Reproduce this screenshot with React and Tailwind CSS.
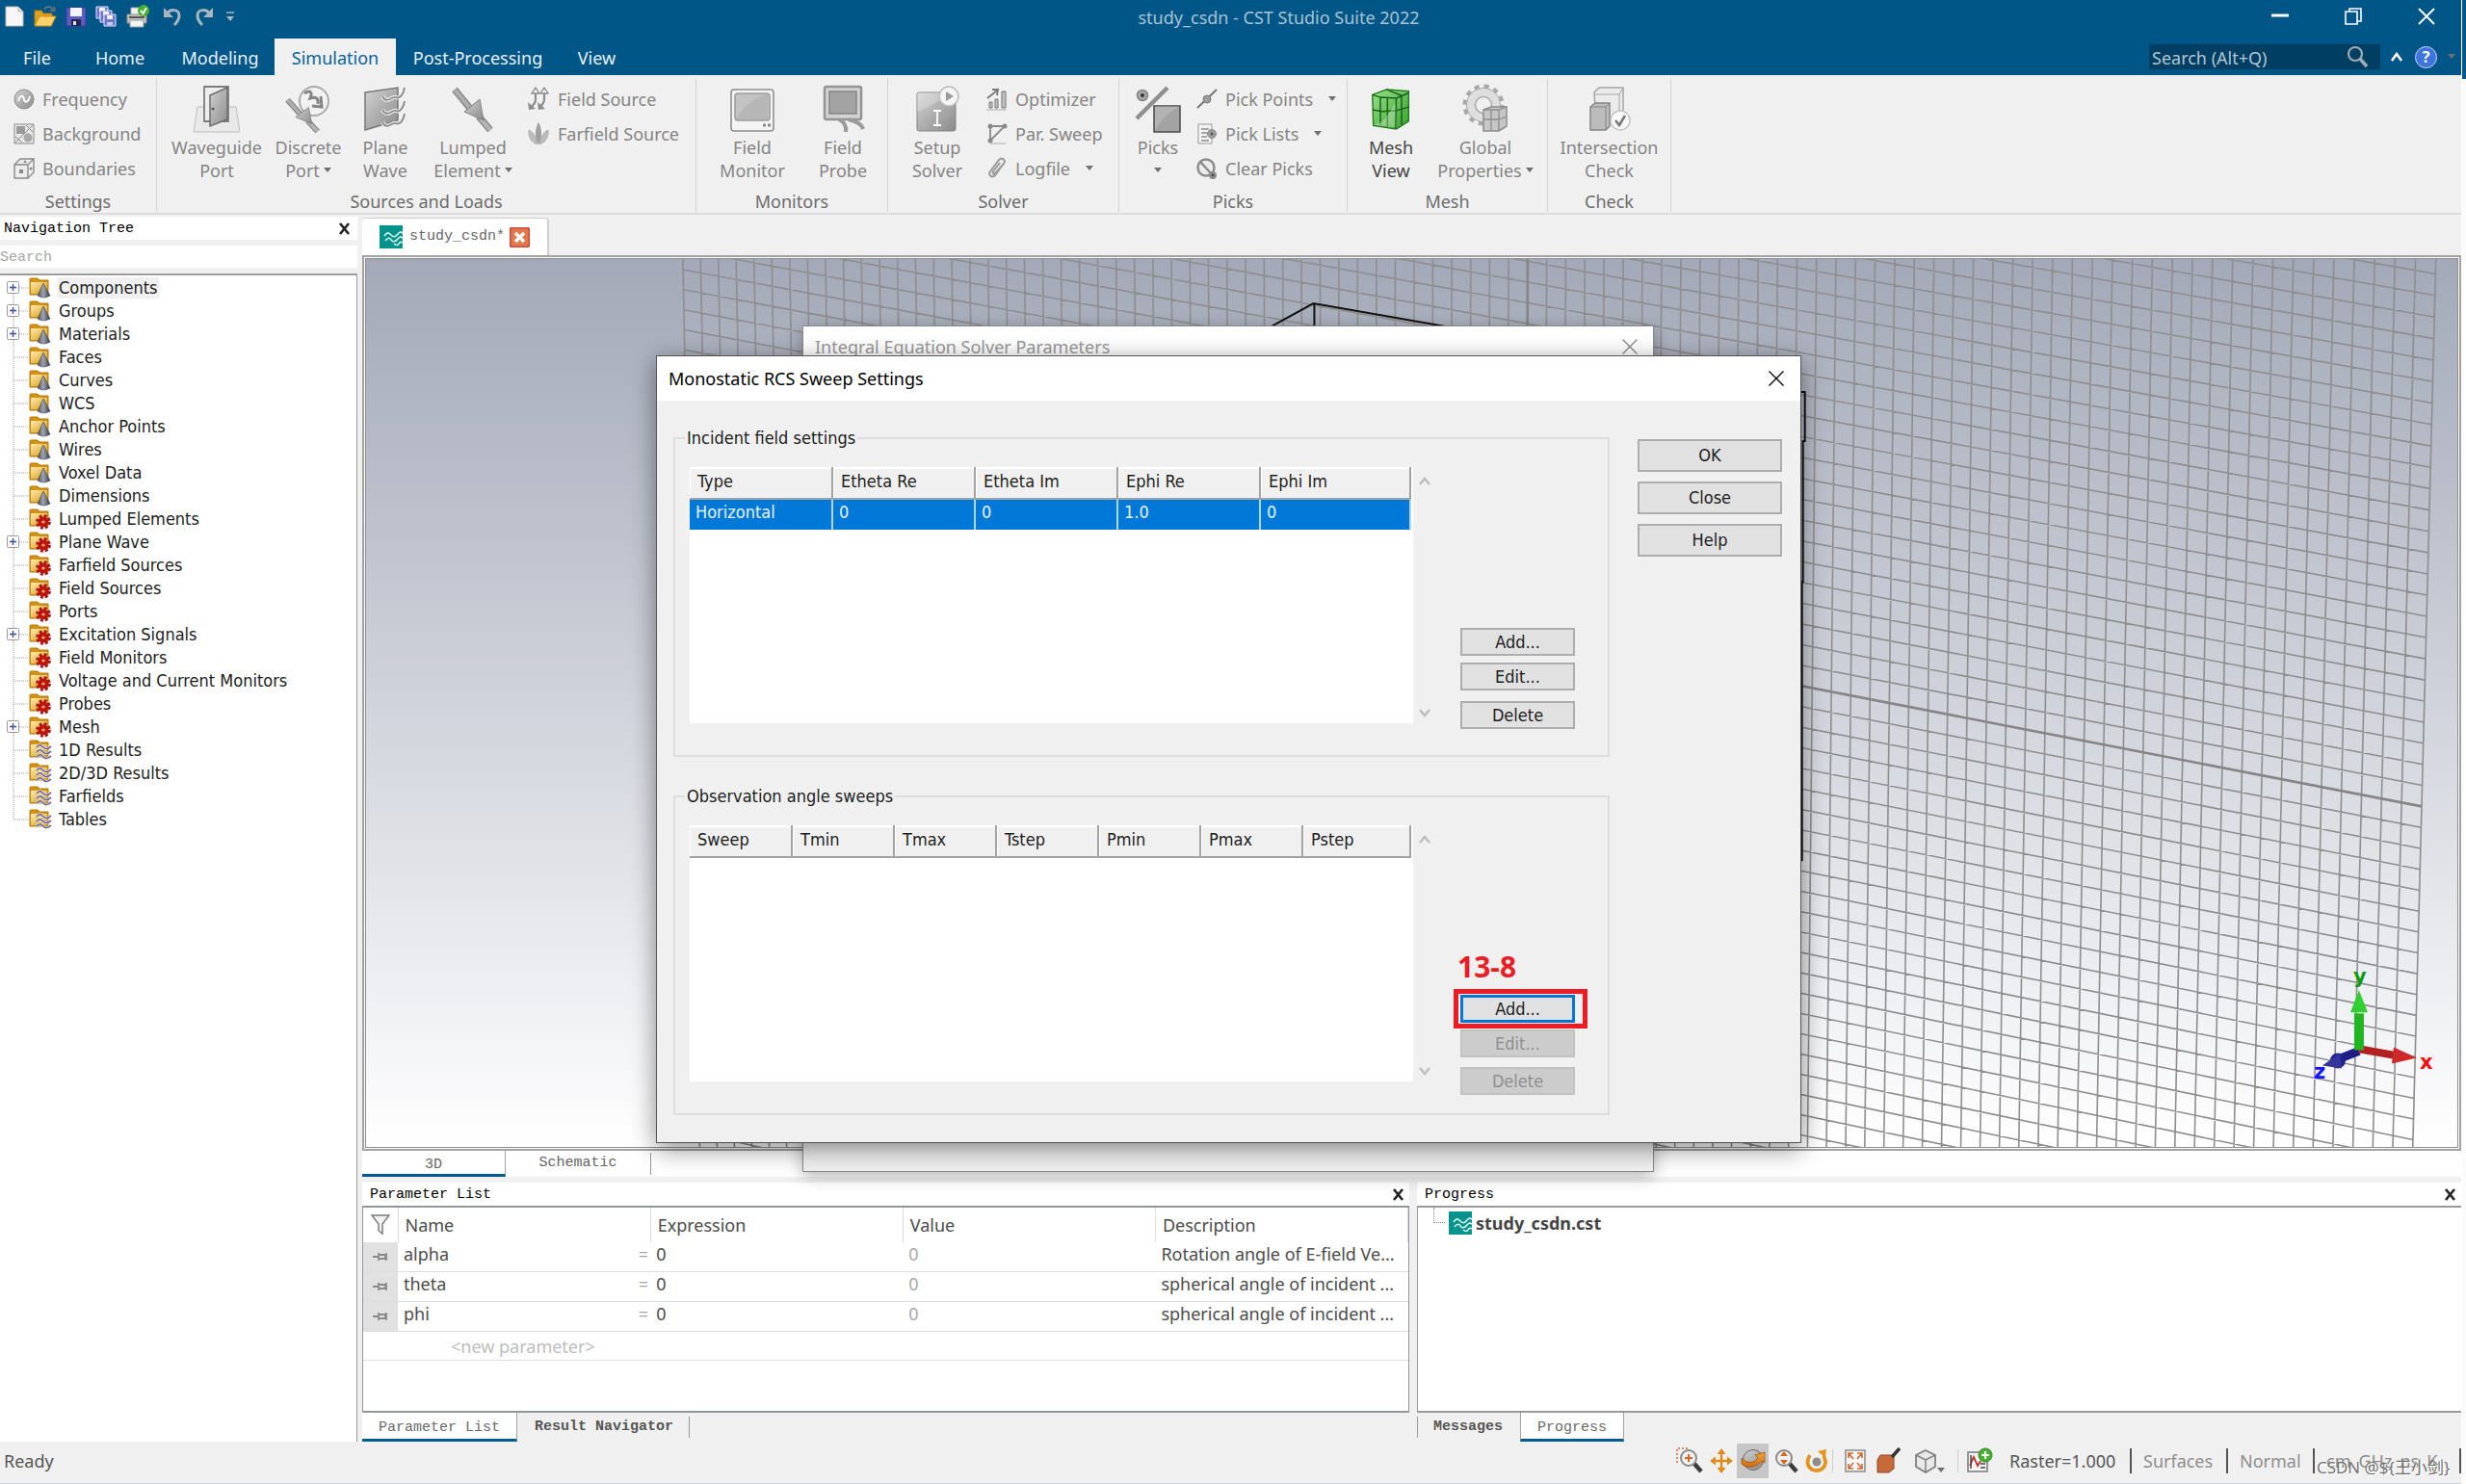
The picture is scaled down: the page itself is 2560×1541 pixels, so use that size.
import React from "react";

const UI = "font-['Noto_Sans','Open_Sans',sans-serif]";
const TAHOMA = "font-['DejaVu_Sans_Condensed','DejaVu_Sans',sans-serif]";
const MONO = "font-['Liberation_Mono',monospace]";

/* ---------- shared defs ---------- */
function Defs() {
  return (
    <svg width="0" height="0" className="absolute" aria-hidden="true">
      <defs>
        <linearGradient id="gm" x1="0" y1="0" x2="1" y2="1">
          <stop offset="0" stopColor="#d2d2d2" />
          <stop offset="1" stopColor="#8b8b8b" />
        </linearGradient>
        <linearGradient id="gy" x1="0" y1="0" x2="1" y2="1">
          <stop offset="0" stopColor="#fdeeb0" />
          <stop offset="1" stopColor="#d9960c" />
        </linearGradient>
        <linearGradient id="gc" x1="0" y1="0" x2="1" y2="0">
          <stop offset="0" stopColor="#4a4d54" />
          <stop offset="0.45" stopColor="#a0a5b3" />
          <stop offset="1" stopColor="#35383f" />
        </linearGradient>
        <linearGradient id="gg" x1="0" y1="0" x2="1" y2="1">
          <stop offset="0" stopColor="#9be089" />
          <stop offset="1" stopColor="#35a32b" />
        </linearGradient>
        <linearGradient id="go" x1="0" y1="0" x2="0" y2="1">
          <stop offset="0" stopColor="#f0a63a" />
          <stop offset="1" stopColor="#cc6a12" />
        </linearGradient>
      </defs>
    </svg>
  );
}

function Svg({ w, h, vb, children, cls = "" }) {
  return (
    <svg width={w} height={h} viewBox={vb || `0 0 ${w} ${h}`} fill="none" aria-hidden="true" className={"shrink-0 " + cls}>
      {children}
    </svg>
  );
}

const Caret = ({ cls = "" }) => (
  <Svg w={8} h={6} cls={cls}><path d="M0 0h8L4 5z" fill="#6f6f6f" /></Svg>
);

const CloseX = () => (
  <Svg w={14} h={16}><path d="M2 2l9 11M11 2L2 13" stroke="#222" strokeWidth="2.6" /></Svg>
);

const ThinX = ({ color }) => (
  <Svg w={16} h={16}><path d="M.5.5l15 15M15.5.5l-15 15" stroke={color} strokeWidth="1.3" /></Svg>
);

function CstLogo() {
  return (
    <Svg w={24} h={24}>
      <path d="M0 0h24v24H0z" fill="#07928c" />
      <path d="M5 11c3-5 5-3 7-1s4 3 7-1 4-1 5-1M6 16c3-4 5-3 6-1s4 3 7-1 4-1 5-1M15 19c2 2 4 2 5 0s3-2 4-1" stroke="#d5f3f0" strokeWidth="1.6" />
    </Svg>
  );
}

/* ---------- quick access icons ---------- */
const QNew = () => (
  <Svg w={20} h={24}><path d="M1 2h13l5 5v15H1z" fill="#f7f7f7" stroke="#b9b9b9" /><path d="M14 2v5h5" fill="#d8d8d8" stroke="#b9b9b9" /></Svg>
);
const QOpen = () => (
  <Svg w={25} h={24}>
    <path d="M2 6h7l2 3h9v12H2z" fill="#e0a021" stroke="#b47c10" />
    <path d="M7 12h17l-5 10H2z" fill="#fbd26a" stroke="#c98f18" />
    <path d="M12 5c2-4 8-4 9 1m-3 0h5l-1-4" stroke="#6b7480" strokeWidth="1.6" />
  </Svg>
);
const QSave = () => (
  <Svg w={22} h={24}><path d="M1 3h20v18l-2 1H1z" fill="#5b5bc4" stroke="#3c3c94" /><path d="M5 3h12v9H5z" fill="#f2f4fb" /><path d="M6 15h10v7H6z" fill="#26264f" /><path d="M8 17h3v4H8z" fill="#dfe3f5" /></Svg>
);
const QSaveAll = () => (
  <Svg w={23} h={24}>
    {[[1, 2], [5, 6], [9, 10]].map(([x, y]) => (
      <g key={x}><path d={`M${x} ${y}h12v12H${x}z`} fill="#6f75cf" stroke="#e3e5fb" /><path d={`M${x + 3} ${y + 1}h6v4h-6z`} fill="#f2f4fb" /><path d={`M${x + 3} ${y + 8}h6v3h-6z`} fill="#c8cdf2" /></g>
    ))}
  </Svg>
);
const QPrint = () => (
  <Svg w={24} h={26}>
    <path d="M5 4h11v8H5z" fill="#f2f2f2" stroke="#aaa" /><path d="M1 11h20v9H1z" fill="#c4c4c0" stroke="#8d8d8a" /><path d="M4 17h14v7H4z" fill="#f4f4f4" stroke="#999" /><path d="M3 14h16" stroke="#555" strokeWidth="2" />
    <circle cx="18" cy="7" r="6" fill="#43b02e" /><path d="M15 7l2.5 3L21 4" stroke="#fff" strokeWidth="2" />
  </Svg>
);
const QUndo = () => (
  <Svg w={20} h={22}><path d="M1 2v10h10z" fill="#a9b6bf" /><path d="M4 9c3-6 13-6 13 1 0 4-2 7-5 10" stroke="#a9b6bf" strokeWidth="3" /></Svg>
);
const QRedo = () => (
  <Svg w={20} h={22}><path d="M19 2v10H9z" fill="#a9b6bf" /><path d="M16 9C13 3 3 3 3 10c0 4 2 7 5 10" stroke="#a9b6bf" strokeWidth="3" /></Svg>
);

/* ---------- ribbon icons: small ---------- */
const IFreq = () => (<Svg w={22} h={24}><circle cx="11" cy="12" r="10" fill="url(#gm)" stroke="#8a8a8a" /><path d="M5 14c2-7 5-6 6-2s4 4 6-3" stroke="#fff" strokeWidth="2" /></Svg>);
const IBack = () => (<Svg w={22} h={24}><path d="M1 2h20v20H1z" fill="#e8e8e8" stroke="#8a8a8a" /><path d="M3 4h9v8H3z" fill="#9a9a9a" /><circle cx="15" cy="16" r="4.5" fill="#a8a8a8" /><path d="M2 21L20 3M2 15l7 6M13 3l7 7" stroke="#8a8a8a" /></Svg>);
const IBound = () => (<Svg w={22} h={24}><path d="M1 8h14v14H1zM1 8l6-6h14l-6 6M15 22l6-6V2" fill="#ececec" stroke="#8a8a8a" strokeWidth="1.4" /><path d="M6 13h4v4H6z" fill="#8a8a8a" /><circle cx="18" cy="12" r="1.5" fill="#8a8a8a" /><circle cx="12" cy="5" r="1.3" fill="#8a8a8a" /></Svg>);
const IFieldSrc = () => (<Svg w={24} h={26}><path d="M9 3v10c0 4-3 7-6 9M18 3v10c0 4-3 7-5 9" stroke="#8c8c8c" strokeWidth="2.2" /><path d="M9 1l4 6H5zM18 1l4 6h-8z" fill="#efefef" stroke="#8c8c8c" strokeWidth="1.3" /><path d="M1 16l1 8 7-1zM11 16l1 8 7-1z" fill="#8c8c8c" /></Svg>);
const IFarSrc = () => (<Svg w={24} h={26}><path d="M11 24C4 22 1 15 2 9c5 2 8 8 9 15zM13 24c7-2 10-9 9-15-5 2-8 8-9 15z" fill="#bcbcbc" stroke="#9c9c9c" strokeWidth=".6" /><path d="M12 24C7 16 9 6 12 1c3 5 5 15 0 23z" fill="#a0a0a0" /></Svg>);
const IOptim = () => (<Svg w={22} h={24}><path d="M3 15h3v6H3zM9 12h3v9H9zM16 4h4v17h-4z" fill="#c2c2c2" stroke="#777" /><path d="M1 11L11 3M6 2h6l-1 6" stroke="#777" strokeWidth="1.8" /><path d="M0 23h21" stroke="#aaa" /></Svg>);
const ISweep = () => (<Svg w={22} h={24}><path d="M4 4v15L19 4H4" stroke="#888" strokeWidth="1.8" /><path d="M4 22h16" stroke="#aaa" /><circle cx="4" cy="4" r="2.5" fill="#888" /><circle cx="19" cy="4" r="2.5" fill="#888" /><circle cx="4" cy="19" r="2.5" fill="#888" /></Svg>);
const IClip = () => (<Svg w={22} h={24}><path d="M17 8l-8 11c-3 3-8 0-5-4L13 3c3-3 8 0 5 4L9 17c-2 1-3 0-2-2l7-9" stroke="#9a9a9a" strokeWidth="2" /></Svg>);
const IPickPt = () => (<Svg w={22} h={24}><path d="M1 21L21 2" stroke="#777" strokeWidth="2" /><circle cx="11" cy="12" r="4" fill="#9d9d9d" stroke="#777" /></Svg>);
const IPickLs = () => (<Svg w={22} h={24}><path d="M2 2h14v20H2z" fill="#f3f3f3" stroke="#999" /><path d="M5 7h8M5 11h6M5 15h6M5 19h8" stroke="#8c8c8c" strokeWidth="1.5" /><circle cx="16" cy="12" r="4.5" fill="#9d9d9d" stroke="#888" /><circle cx="16" cy="12" r="1.5" fill="#555" /></Svg>);
const IPickCl = () => (<Svg w={22} h={24}><circle cx="10" cy="11" r="8.5" fill="#ededed" stroke="#8b8b8b" strokeWidth="2.5" /><path d="M4 5l12 13" stroke="#8b8b8b" strokeWidth="2.5" /><circle cx="17" cy="19" r="4" fill="#8b8b8b" /><circle cx="17" cy="19" r="1.3" fill="#444" /></Svg>);

/* ---------- ribbon icons: large ---------- */
const LWave = () => (
  <Svg w={48} h={50}><path d="M4 23h40l4 26H0z" fill="#e9e9e9" stroke="#bdbdbd" /><path d="M11 2h25v36H11z" fill="#ededed" stroke="#7d7d7d" strokeWidth="1.8" /><path d="M17 11L35 3v33l-18 7z" fill="url(#gm)" stroke="#6d6d6d" strokeWidth="1.5" /><circle cx="20" cy="25" r="1.5" fill="#555" /></Svg>
);
/* Probe-like pin: a thick lead, a cone head and a short tail. */
const PinArrow = () => (
  <g>
    <path d="M3 6l18 22" stroke="#7e7e7e" strokeWidth="7" /><path d="M3 6l18 22" stroke="#adadad" strokeWidth="4.5" />
    <path d="M28 34l12 14" stroke="#7e7e7e" strokeWidth="7" /><path d="M28 34l12 14" stroke="#b5b5b5" strokeWidth="4.5" />
    <path d="M13 29L29 16l4 22z" fill="url(#gm)" stroke="#808080" />
  </g>
);
const LDisc = () => (
  <Svg w={48} h={50}><circle cx="30" cy="17" r="15" fill="#f2f2f2" stroke="#ababab" strokeWidth="2" /><path d="M20 9c5-4 9-2 6 5 6-2 9 0 8 6m-6 2l10 1-1-11" stroke="#858585" strokeWidth="3" /><g transform="translate(0 11) scale(.84 .78)"><PinArrow /></g></Svg>
);
const LPlane = () => (
  <Svg w={46} h={50}><path d="M2 8l34-5v34L2 47z" fill="url(#gm)" stroke="#777" strokeWidth="1.5" />{[0, 14, 27].map((y) => (<path key={y} d={`M20 ${y + 12}c5 9 10-1 14 1s8-3 9-10`} stroke="#eee" strokeWidth="4" />))}{[0, 14, 27].map((y) => (<path key={y + 50} d={`M20 ${y + 12}c5 9 10-1 14 1s8-3 9-10`} stroke="#8a8a8a" strokeWidth="1.8" />))}</Svg>
);
const LLump = () => (<Svg w={46} h={50}><g transform="translate(1 -1)"><PinArrow /></g></Svg>);
const LMon = () => (
  <Svg w={48} h={50}><rect x="2" y="5" width="44" height="43" rx="3" fill="#f4f4f4" stroke="#8f8f8f" strokeWidth="1.6" /><rect x="6" y="9" width="36" height="28" rx="3" fill="#c3c3c3" stroke="#9a9a9a" strokeWidth="1.5" /><path d="M7 36C12 26 24 14 40 10v24c0 2-2 2-3 2z" fill="#a9a9a9" opacity=".5" /><path d="M35 42h3M40 42h3" stroke="#888" strokeWidth="3" /></Svg>
);
const LProbe = () => (
  <Svg w={48} h={50}><rect x="5" y="2" width="38" height="34" rx="2" fill="#d2d2d2" stroke="#949494" strokeWidth="2.5" /><rect x="10" y="7" width="28" height="23" fill="#a3a3a3" stroke="#858585" strokeWidth="1.5" /><path d="M20 36c6 3 8 7 7 13M30 36c7 2 13 4 15 10" stroke="#9a9a9a" strokeWidth="4" /></Svg>
);
const LSolver = () => (
  <Svg w={48} h={50}><path d="M3 10q0-2 2-2h36q2 0 2 2v36q0 2-2 2H5q-2 0-2-2z" fill="url(#gm)" stroke="#858585" /><path d="M3 28C16 24 30 14 36 8H5q-2 0-2 2z" fill="#fff" opacity=".25" /><path d="M20 27h8M20 42h8M24 27v15" stroke="#fff" strokeWidth="1.8" /><circle cx="36" cy="12" r="10" fill="#f4f4f4" stroke="#bbb" strokeWidth="1.5" /><path d="M33 7l8 5-8 5z" fill="#999" /></Svg>
);
const LPicks = () => (
  <Svg w={48} h={50}><path d="M2 35L34 3" stroke="#8f8f8f" strokeWidth="4.5" /><circle cx="8" cy="11" r="5.5" fill="#a8a8a8" stroke="#838383" strokeWidth="1.5" /><circle cx="8" cy="11" r="2" fill="#333" /><path d="M20 22h27v27H20z" fill="#a3a3a3" stroke="#4a4a4a" strokeWidth="1.5" /><path d="M21 48C25 38 36 28 46 23v-1H21z" fill="#fff" opacity=".18" /></Svg>
);
const LMesh = () => (
  <Svg w={46} h={44} vb="0 0 48 48"><path d="M3 8l16-6 25 2v34l-14 9-26-4z" fill="url(#gg)" stroke="#1f7a1b" strokeWidth="1.5" /><path d="M3 8l9 3 18 1 14-6M12 11v31M30 12l-1 34M20 12v32M3 25l11 2 16-1 14-4M19 2l17 7v33" stroke="#14611a" strokeWidth="1.6" /><path d="M5 42l10-4 14-20v27z" fill="#fff" opacity=".3" /></Svg>
);
const LGear = () => (
  <Svg w={48} h={52}>
    <circle cx="22" cy="22" r="19" stroke="#a8a8a8" strokeWidth="5" strokeDasharray="5 4.95" />
    <circle cx="22" cy="22" r="13" stroke="#dedede" strokeWidth="9" />
    <circle cx="22" cy="22" r="17.5" stroke="#a8a8a8" /><circle cx="22" cy="22" r="8.5" stroke="#a8a8a8" strokeWidth="1.5" />
    <path d="M22 27l8-3h16v20l-8 5H22z" fill="#c6c6c6" stroke="#8d8d8d" strokeWidth="1.5" /><path d="M22 27h16l8-3M38 27v22M30 27v22M22 37h16l8-3" stroke="#8d8d8d" strokeWidth="1.3" />
  </Svg>
);
const LInter = () => (
  <Svg w={44} h={50}><path d="M6 8l5-5h25v30l-4 4H8z" fill="#ebebeb" stroke="#a5a5a5" strokeWidth="1.5" /><path d="M6 10h26l4-7M32 10v26" stroke="#a5a5a5" /><path d="M2 23l5-4h15v24l-4 4H2z" fill="#bcbcbc" stroke="#858585" strokeWidth="1.5" /><path d="M2 23h16l4-4M18 23v24" stroke="#858585" /><circle cx="33" cy="37" r="10" fill="#fafafa" stroke="#c5c5c5" strokeWidth="1.5" /><path d="M28 37l4 5 6-10" stroke="#777" strokeWidth="2.5" /></Svg>
);

/* ---------- ribbon ---------- */
function Big({ icon, l1, l2, w, caret, dark }) {
  return (
    <button className={"flex flex-col items-center text-lg leading-6 " + w + (dark ? " text-[#444]" : " text-[#848484]")}>
      <span className="flex h-[56px] items-center">{icon}</span>
      <span className="whitespace-nowrap">{l1}</span>
      <span className="flex h-6 items-center gap-1 whitespace-nowrap">{l2}{caret && <Caret />}</span>
    </button>
  );
}
function Small({ icon, label, caret }) {
  return (
    <button className="flex h-9 items-center gap-2 whitespace-nowrap text-lg text-[#848484]">
      {icon}<span>{label}</span>{caret && <Caret cls="ml-2" />}
    </button>
  );
}
function Group({ label, w, children }) {
  return (
    <section className={"flex shrink-0 flex-col border-r border-[#d4d4d4] " + w}>
      <div className="flex h-[116px] pt-[3px]">{children}</div>
      <div className="text-center text-lg leading-[22px] text-[#6c6c6c]">{label}</div>
    </section>
  );
}
function Ribbon() {
  return (
    <div className="flex h-[145px] border-b-2 border-[#dcdcdc] pt-1 pb-px">
      <Group label="Settings" w="w-[163px]">
        <div className="flex flex-col pl-3.5">
          <Small icon={<IFreq />} label="Frequency" /><Small icon={<IBack />} label="Background" /><Small icon={<IBound />} label="Boundaries" />
        </div>
      </Group>
      <Group label="Sources and Loads" w="w-[560px]">
        <Big w="w-[124px]" icon={<LWave />} l1="Waveguide" l2="Port" />
        <Big w="w-[66px]" icon={<LDisc />} l1="Discrete" l2="Port" caret />
        <Big w="w-[94px]" icon={<LPlane />} l1="Plane" l2="Wave" />
        <Big w="w-[88px]" icon={<LLump />} l1="Lumped" l2="Element" caret />
        <div className="flex flex-col pl-3"><Small icon={<IFieldSrc />} label="Field Source" /><Small icon={<IFarSrc />} label="Farfield Source" /></div>
      </Group>
      <Group label="Monitors" w="w-[199px]">
        <Big w="w-[116px]" icon={<LMon />} l1="Field" l2="Monitor" /><Big w="w-[72px]" icon={<LProbe />} l1="Field" l2="Probe" />
      </Group>
      <Group label="Solver" w="w-[240px]">
        <Big w="w-[102px]" icon={<LSolver />} l1="Setup" l2="Solver" />
        <div className="flex flex-col"><Small icon={<IOptim />} label="Optimizer" /><Small icon={<ISweep />} label="Par. Sweep" /><Small icon={<IClip />} label="Logfile" caret /></div>
      </Group>
      <Group label="Picks" w="w-[237px]">
        <Big w="w-[80px]" icon={<LPicks />} l1="Picks" l2="" caret />
        <div className="flex flex-col"><Small icon={<IPickPt />} label="Pick Points" caret /><Small icon={<IPickLs />} label="Pick Lists" caret /><Small icon={<IPickCl />} label="Clear Picks" /></div>
      </Group>
      <Group label="Mesh" w="w-[208px]">
        <Big dark w="w-[90px]" icon={<LMesh />} l1="Mesh" l2="View" /><Big w="w-[106px]" icon={<LGear />} l1="Global" l2="Properties" caret />
      </Group>
      <Group label="Check" w="w-[128px]"><Big w="w-[128px]" icon={<LInter />} l1="Intersection" l2="Check" /></Group>
    </div>
  );
}

function TitleBar() {
  const tab = "flex h-full items-center justify-center pt-0.5 text-lg text-[#e6f0f6]";
  return (
    <header className="bg-[#005687]">
      <div className="flex h-10 items-start">
        <div className="flex w-[400px] items-center gap-[9px] pt-1 pl-[5px]">
          <QNew /><QOpen /><QSave /><QSaveAll /><QPrint /><span className="flex gap-[13px] pl-[5px]"><QUndo /><QRedo /></span>
          <Svg w={10} h={12} cls="ml-[3px]"><path d="M1 2h8" stroke="#a9b6bf" strokeWidth="1.5" /><path d="M1 6h8l-4 5z" fill="#a9b6bf" /></Svg>
        </div>
        <h1 className="flex-1 pt-1 text-center text-lg text-[#a7c3d5]">study_csdn - CST Studio Suite 2022</h1>
        <div className="flex w-[300px] items-center justify-end gap-[58px] pt-2 pr-[27px]">
          <button aria-label="Minimize"><Svg w={18} h={18}><path d="M0 8h18" stroke="#fff" strokeWidth="3" /></Svg></button>
          <button aria-label="Restore"><Svg w={18} h={18}><path d="M1 4h12v13H1zM5 4V1h12v13h-4" stroke="#fff" strokeWidth="1.6" /></Svg></button>
          <button aria-label="Close"><Svg w={18} h={18}><path d="M1 1l16 16M17 1L1 17" stroke="#fff" strokeWidth="1.8" /></Svg></button>
        </div>
      </div>
      <nav className="flex h-[38px] items-center">
        <button className={tab + " w-[77px]"}>File</button>
        <button className={tab + " w-[95px]"}>Home</button>
        <button className={tab + " w-[113px]"}>Modeling</button>
        <button className="flex h-full w-[126px] items-center justify-center bg-[#f0f0f0] pt-0.5 text-lg text-[#0a639b]">Simulation</button>
        <button className={tab + " w-[170px]"}>Post-Processing</button>
        <button className={tab + " w-[77px]"}>View</button>
        <div className="flex-1" />
        <label className="flex h-[26px] w-[240px] items-center bg-[#003f63] pr-3 pl-[3px]">
          <input aria-label="Search" placeholder="Search (Alt+Q)" className="w-full min-w-0 flex-1 bg-transparent pt-0.5 text-lg leading-6 text-white outline-none placeholder:text-[#b0c6d4]" />
          <Svg w={24} h={24}><circle cx="10" cy="9" r="7" stroke="#9cabb5" strokeWidth="2.2" /><path d="M15 14l7 8" stroke="#9cabb5" strokeWidth="3.5" /></Svg>
        </label>
        <div className="flex items-center gap-[9px] pr-1 pl-[7px]">
          <span className="flex w-5 justify-center"><Svg w={12} h={10}><path d="M1 9l5-7 5 7" stroke="#fff" strokeWidth="2.5" /></Svg></span>
          <button aria-label="Help" className="flex size-[23px] items-center justify-center rounded-full border border-[#c8d8ff] bg-[#3d74dd] text-base font-bold text-white">?</button>
          <span className="flex w-3 justify-center"><Caret /></span>
        </div>
      </nav>
    </header>
  );
}

/* ---------- navigation tree ---------- */
const TREE = [
  ["Components", "c", 1], ["Groups", "c", 1], ["Materials", "c", 1], ["Faces", "c"], ["Curves", "c"], ["WCS", "c"],
  ["Anchor Points", "c"], ["Wires", "c"], ["Voxel Data", "c"], ["Dimensions", "c"], ["Lumped Elements", "g"],
  ["Plane Wave", "g", 1], ["Farfield Sources", "g"], ["Field Sources", "g"], ["Ports", "g"], ["Excitation Signals", "g", 1],
  ["Field Monitors", "g"], ["Voltage and Current Monitors", "g"], ["Probes", "g"], ["Mesh", "g", 1],
  ["1D Results", "r"], ["2D/3D Results", "r"], ["Farfields", "r"], ["Tables", "r"],
];
function Folder({ kind }) {
  return (
    <Svg w={24} h={24}>
      <path d="M1 3q0-1 1-1h7l2 2h9v15H1z" fill="#d6920e" stroke="#b57a08" />
      <path d="M2 6h17v12H2z" fill="url(#gy)" />
      {kind === "c" && <path d="M15 7l7 13q-7 4-13 0z" fill="url(#gc)" stroke="#3c3f46" strokeWidth=".6" />}
      {kind === "g" && (<g><circle cx="15" cy="15" r="6" stroke="#a90f12" strokeWidth="3.6" strokeDasharray="2.6 2.1" /><circle cx="15" cy="15" r="3.6" stroke="#bd1315" strokeWidth="4" /><circle cx="15" cy="15" r="1.3" fill="#e8b070" /></g>)}
      {kind === "r" && [8, 13, 18].map((y) => (<path key={y} d={`M8 ${y + 1}c3-4 5-2 7 0s5 2 8-1`} stroke="#f3ead2" strokeWidth="3" />))}
      {kind === "r" && [8, 13, 18].map((y) => (<path key={y + 50} d={`M8 ${y + 1}c3-4 5-2 7 0s5 2 8-1`} stroke="#5b5aa8" strokeWidth="1.5" />))}
    </Svg>
  );
}
function NavTree() {
  return (
    <aside className="flex w-[371px] shrink-0 flex-col pt-0.5">
      <div className={"flex h-6 items-center justify-between bg-white pt-0.5 pr-1.5 pl-1 text-[15px] text-black " + MONO}>
        <span>Navigation Tree</span><button aria-label="Close navigation tree"><CloseX /></button>
      </div>
      <input aria-label="Search tree" placeholder="Search" className={"my-1.5 h-[23px] w-full bg-white pt-0.5 text-[15px] outline-none placeholder:text-[#a6a6a6] " + MONO} />
      <ul className={"flex-1 border-t-2 border-r border-[#9c9c9c] bg-white pt-px text-lg text-[#1d1d1d] " + TAHOMA}>
        {TREE.map(([name, kind, plus], i) => (
          <li key={name} className="flex h-6 items-center">
            <svg width="29" height="24" fill="none" aria-hidden="true" className="ml-px shrink-0">
              <path d={`M13 ${i === 0 ? 12 : 0}V${i === TREE.length - 1 ? 12 : 24}M13 12h16`} stroke="#9a9a9a" strokeDasharray="1 1" />
              {plus && <g><rect x="6.5" y="5.5" width="12" height="12" rx="1" fill="#fff" stroke="#9a9a9a" /><path d="M9 11.5h7M12.5 8v7" stroke="#3b4fa0" strokeWidth="1.4" /></g>}
            </svg>
            <Folder kind={kind} />
            <span className={"ml-[5px] px-0.5 leading-[22px] " + (i === 0 ? "bg-[#f0f0f0]" : "")}>{name}</span>
          </li>
        ))}
      </ul>
    </aside>
  );
}

/* ---------- 3D view ---------- */
/* Solves the projective map that takes four (u,v) grid points to view points. */
function homography(src, dst) {
  const m = [];
  src.forEach(([u, v], i) => {
    const [x, y] = dst[i];
    m.push([u, v, 1, 0, 0, 0, -u * x, -v * x, x]);
    m.push([0, 0, 0, u, v, 1, -u * y, -v * y, y]);
  });
  for (let c = 0; c < 8; c++) {
    let p = c;
    for (let r = c + 1; r < 8; r++) if (Math.abs(m[r][c]) > Math.abs(m[p][c])) p = r;
    [m[c], m[p]] = [m[p], m[c]];
    for (let r = 0; r < 8; r++) {
      if (r === c) continue;
      const f = m[r][c] / m[c][c];
      for (let k = c; k < 9; k++) m[r][k] -= f * m[c][k];
    }
  }
  const h = m.map((row, i) => row[8] / row[i]);
  return (u, v) => {
    const w = h[6] * u + h[7] * v + 1;
    return [((h[0] * u + h[1] * v + h[2]) / w).toFixed(1), ((h[3] * u + h[4] * v + h[5]) / w).toFixed(1)];
  };
}
const project = homography(
  [[0, -10], [0, 34], [92, -26], [92, 16]],
  [[329, 11], [346, 908], [2148, -7], [2124, 914]]
);
const seg = (a, b) => `M${project(...a).join(" ")}L${project(...b).join(" ")}`;
let gridPath = "";
for (let i = 0; i <= 92; i++) if (i !== 46) gridPath += seg([i, -46], [i, 46]);
for (let j = -46; j <= 46; j++) if (j !== 0) gridPath += seg([0, j], [92, j]);
const axisPath = seg([46, -46], [46, 46]) + seg([0, 0], [92, 0]);

function View3D() {
  return (
    <div className="relative min-h-0 flex-1 border-2 border-[#a2a2a2] bg-white p-px">
      <div className="relative h-full overflow-hidden border border-[#8e8e8e] bg-linear-to-b from-[#a3a9b8] to-white">
        <svg viewBox="0 0 2170 922" preserveAspectRatio="xMinYMin slice" className="absolute inset-0 h-full w-full" fill="none" role="img" aria-label="3D model view">
          <path d={gridPath} stroke="#8e8e8e" strokeWidth="1.6" />
          <path d={axisPath} stroke="#858585" strokeWidth="2.6" />
          <path d="M930 75L983 46L1120 70M984 46V90M1485 138h8v51h-2v146h-1v290" stroke="#111" strokeWidth="2" />
          <g transform="translate(-2 5)">
            <path d="M2070 817L2042 828" stroke="#1e1e86" strokeWidth="9" />
            <circle cx="2048" cy="827" r="8" fill="#22228e" /><path d="M2050 819l-18 13 20 3z" fill="#34349a" />
            <path d="M2070 815l40 7" stroke="#b22020" strokeWidth="8" /><path d="M2106 813l24 11-26 6z" fill="#cf2a2a" />
            <path d="M2070 816V778" stroke="#22b522" strokeWidth="10" /><path d="M2070 754l9 23h-18z" fill="#2fd02f" />
          </g>
          <g fontFamily="DejaVu Sans" fontWeight="700" fontSize="21">
            <text x="2062" y="752" fill="#0b9b0b">y</text><text x="2131" y="841" fill="#f01010">x</text><text x="2021" y="851" fill="#1414ff">z</text>
          </g>
        </svg>
      </div>
    </div>
  );
}

/* ---------- bottom panels ---------- */
function PanelTitle({ title }) {
  return (
    <div className={"flex h-6 items-center justify-between bg-white pt-0.5 pr-1 pl-2 text-[15px] text-black " + MONO}>
      <span>{title}</span><button aria-label={"Close " + title}><CloseX /></button>
    </div>
  );
}
const activeTab = "flex h-[30px] items-center justify-center border-r border-b-[3px] border-r-[#a5a5a5] border-b-[#005d92] bg-white pt-1.5 text-[15px] text-[#6a6a6a]";
const Pin = () => (<Svg w={18} h={10}><path d="M0 5h6M6 1v8M7 3h6v4H7M14 1v8" stroke="#8a8a8a" strokeWidth="1.8" /></Svg>);

function ParameterList() {
  const rows = [["alpha", "Rotation angle of E-field Ve..."], ["theta", "spherical angle of incident ..."], ["phi", "spherical angle of incident ..."]];
  const th = "border-r border-[#dcdcdc] pl-[7px] text-left font-normal";
  const td = "pb-1.5 pl-1.5 ";
  return (
    <section className="flex min-w-0 flex-[1087_1_0%] flex-col">
      <PanelTitle title="Parameter List" />
      <div className="h-[215px] border border-t-2 border-b-2 border-[#90969b] bg-white">
        <table className="w-full table-fixed border-collapse text-lg leading-6 text-[#4c4c4c]">
          <colgroup><col className="w-9" /><col /><col /><col /><col /></colgroup>
          <thead>
            <tr className="h-9">
              <th className="border-r border-[#dcdcdc]" aria-label="Filter"><Svg w={20} h={22} cls="mx-auto"><path d="M1 1h18l-7 9v10l-4-3v-7z" fill="#f2f2f2" stroke="#777" strokeWidth="1.4" /></Svg></th>
              <th className={th}>Name</th><th className={th}>Expression</th><th className={th}>Value</th><th className={th}>Description</th>
            </tr>
          </thead>
          <tbody>
            {rows.map(([n, d]) => (
              <tr key={n} className="h-[30px] border-b border-[#dedede]">
                <td className="bg-[#e1e1e1] pl-2.5"><Pin /></td>
                <td className={td}><span className="flex justify-between pr-0.5"><span>{n}</span><span className="text-[#a5a5a5]">=</span></span></td>
                <td className={td}>0</td><td className={td + "text-[#a8a8a8]"}>0</td><td className={td + "whitespace-nowrap"}>{d}</td>
              </tr>
            ))}
            <tr className="h-[30px] border-b border-[#dedede]"><td /><td colSpan={4} className="pl-[55px] text-[#bdbdbd]">&lt;new parameter&gt;</td></tr>
          </tbody>
        </table>
      </div>
      <div className={"flex " + MONO}>
        <button className={activeTab + " w-[161px]"}>Parameter List</button>
        <button className="my-1 h-[22px] border-r border-[#999] pr-4 pl-[18px] text-[15px] font-bold text-[#555]">Result Navigator</button>
      </div>
    </section>
  );
}
function Progress() {
  return (
    <section className="flex min-w-0 flex-[1084_1_0%] flex-col">
      <PanelTitle title="Progress" />
      <div className="h-[215px] border border-t-2 border-r-0 border-b-2 border-[#9a9a9a] bg-white">
        <div className="flex h-8 items-center pl-4 text-lg font-bold text-[#444]">
          <span className="mb-4 h-4 w-3 border-b border-l border-dotted border-[#888]" />
          <span className="ml-1"><CstLogo /></span><span className="ml-1">study_csdn.cst</span>
        </div>
      </div>
      <div className={"flex " + MONO}>
        <button className="my-1 h-[22px] border-l border-[#999] pr-[18px] pl-4 text-[15px] font-bold text-[#555]">Messages</button>
        <button className={activeTab + " w-[108px] border-l border-l-[#a5a5a5]"}>Progress</button>
      </div>
    </section>
  );
}

/* ---------- status bar ---------- */
const Lens = ({ children }) => (<g><path d="M19 17l7 8" stroke="#3c3c3c" strokeWidth="4.5" /><circle cx="13" cy="11" r="8" fill="#f1f1f1" stroke="#8b8b8b" strokeWidth="2" />{children}</g>);
function StatusBar() {
  const sep = <span className="h-6 w-px shrink-0 bg-[#cfcfcf]" />;
  const cell = "flex h-[26px] items-center border-l-2 border-[#555] pl-3 text-lg whitespace-nowrap";
  const ic = "flex w-[33px] justify-center";
  return (
    <footer className="flex h-11 items-center border-b border-[#c5d3e6] pb-1 text-lg text-[#555]">
      <span className="pl-1">Ready</span>
      <div className="flex-1" />
      <button aria-label="Zoom box" className={ic}><Svg w={28} h={28}><path d="M1 16V1h13" stroke="#c76a30" strokeWidth="1.5" strokeDasharray="2 2" /><Lens><path d="M9 11h8M13 7v8" stroke="#d06a20" strokeWidth="2" /></Lens></Svg></button>
      <button aria-label="Pan" className={ic}><Svg w={24} h={26}><path d="M12 4v18M3 13h18" stroke="#e08a1c" strokeWidth="2.5" /><path d="M12 0l4.5 6h-9zM12 26l4.5-6h-9zM0 13l6-4.5v9zM24 13l-6-4.5v9z" fill="#e08a1c" /></Svg></button>
      <button aria-label="Rotate" className="flex h-9 w-[33px] items-center justify-center bg-[#c6c6c6]"><Svg w={26} h={28}><circle cx="13" cy="13" r="10.5" fill="url(#gm)" stroke="#666" /><path d="M1 11c6 6 12 6 17 0l-3-3 10-3v11l-3-2C16 22 5 22 1 17z" fill="url(#go)" stroke="#a65308" strokeWidth=".8" /></Svg></button>
      <button aria-label="Zoom" className={ic}><Svg w={28} h={28}><Lens><path d="M13 4l4 5H9zM13 18l4-5H9z" fill="#d06a20" /></Lens></Svg></button>
      <button aria-label="Reset rotation" className={ic}><Svg w={24} h={26}><circle cx="12" cy="14" r="4.5" fill="#8d8d8d" /><path d="M5 7c-6 9 0 16 7 16s12-8 7-15" stroke="#e3931f" strokeWidth="3.8" /><path d="M13 3l9-2-1 9z" fill="#e3931f" /></Svg></button>
      {sep}
      <button aria-label="Fit" className="flex w-[45px] justify-center"><Svg w={22} h={24}><path d="M1 1h20v22H1z" fill="#f6f6f6" stroke="#8a8a8a" strokeWidth="1.5" /><path d="M4 9V4h5M13 4h5v5M18 15v5h-5M9 20H4v-5M4 4l5 6M18 4l-5 6M18 20l-5-6M4 20l5-6" stroke="#d0692a" strokeWidth="1.6" /></Svg></button>
      <button aria-label="Working plane" className="flex w-[26px] justify-center"><Svg w={26} h={28}><path d="M4 8h14v14l-5 4H1v-13z" fill="#c8693a" stroke="#8e4720" /><path d="M16 10l8-9" stroke="#333" strokeWidth="3.5" /></Svg></button>
      <button aria-label="View cube" className="flex w-[58px] items-end justify-center"><Svg w={24} h={26}><path d="M12 2l10 5v12l-10 6-10-6V7z" fill="#e8e8e8" stroke="#808080" strokeWidth="1.8" /><path d="M2 7l10 5 10-5M12 12v13" stroke="#808080" strokeWidth="1.5" /></Svg><Caret /></button>
      {sep}
      <button aria-label="Add plot" className="mr-4 ml-[7px] flex w-[30px] justify-center"><Svg w={28} h={28}><path d="M2 5h20v20H2z" fill="#f4f4f4" stroke="#777" strokeWidth="1.5" /><path d="M4 19l4-9 4 9 3-5" stroke="#b53030" strokeWidth="1.8" /><path d="M5 8v14M15 17h5M15 21h5" stroke="#444" strokeWidth="1.5" /><circle cx="20" cy="8" r="7" fill="#43b02e" stroke="#2b8a1c" /><path d="M16 8h8M20 4v8" stroke="#fff" strokeWidth="2.2" /></Svg></button>
      <span className="w-[125px] whitespace-nowrap">Raster=1.000</span>
      <span className={cell + " w-[100px] text-[#8d8d8d]"}>Surfaces</span>
      <span className={cell + " w-[90px] text-[#8d8d8d]"}>Normal</span>
      <span className={cell + " relative w-[154px] border-r-2 text-[#8d8d8d]"}>
        <span className="flex gap-2"><span>cm</span><span>GHz</span><span>ns</span><span>K</span></span>
        <span className="absolute top-2 left-0.5 font-['Open_Sans','Noto_Sans_CJK_SC',sans-serif] text-[17px] leading-6 text-[#6f6f6f] text-shadow-[1px_1px_0_#fff]">CSDN @$&#123;王小剑&#125;</span>
      </span>
    </footer>
  );
}

/* ---------- dialogs ---------- */
function ListArrows() {
  return (
    <div className="flex w-6 flex-col items-center justify-between pt-2.5 pb-1.5">
      <Svg w={12} h={10}><path d="M1 8l5-6 5 6" stroke="#bdbdbd" strokeWidth="2.5" /></Svg>
      <Svg w={12} h={10}><path d="M1 2l5 6 5-6" stroke="#bdbdbd" strokeWidth="2.5" /></Svg>
    </div>
  );
}
function ListBox({ heads, row, colW }) {
  return (
    <div className="flex h-[266px]">
      <div className="w-[751px] bg-white pr-0.5">
        <table className="w-full table-fixed border-collapse">
          <colgroup>{heads.map((h, i) => <col key={h} className={i < heads.length - 1 ? colW : ""} />)}</colgroup>
          <thead>
            <tr className="h-[33px]">
              {heads.map((h) => (<th key={h} className="border-r-2 border-b-2 border-[#a3a3a3] bg-[#f0f0f0] pb-0.5 pl-2 text-left leading-6 font-normal shadow-[inset_1px_2px_0_#fff]">{h}</th>))}
            </tr>
          </thead>
          {row && (<tbody><tr className="h-8 bg-[#0078d7] text-[#e8f3fc]">{row.map((c, i) => (<td key={i} className="border-r-2 border-[#b5d4ee] pb-1.5 pl-1.5 leading-6">{c}</td>))}</tr></tbody>)}
        </table>
      </div>
      <ListArrows />
    </div>
  );
}
function Fieldset({ legend, children }) {
  return (
    <fieldset className="h-[343px] w-[972px] border-2 border-[#dddddd]">
      <legend className="ml-2.5 px-0.5 leading-6">{legend}</legend>
      <div className="flex pt-[18px] pl-[15px]">{children}</div>
    </fieldset>
  );
}
const dlgBtn = "flex items-center justify-center border-2 border-[#adadad] bg-[#e1e1e1]";
const sideBtn = "flex h-[29px] w-[119px] items-center justify-center border-2 ";
const sideOn = sideBtn + "border-[#adadad] bg-[#e1e1e1]";
const sideOff = sideBtn + "border-[#c2c2c2] bg-[#cccccc] text-[#8f8f8f]";

function Dialogs() {
  return (
    <>
      <div className="absolute top-[338px] left-[833px] flex h-[879px] w-[884px] flex-col border border-[#8a8a8a] bg-[#f0f0f0] shadow-[0_4px_16px_rgba(0,0,0,0.3)]">
        <div className="flex h-12 items-start justify-between bg-white px-3 pt-[7px] pr-[16px] text-lg leading-7 text-[#999]">
          <span>Integral Equation Solver Parameters</span><span className="pt-1.5"><ThinX color="#888" /></span>
        </div>
      </div>
      <div role="dialog" aria-label="Monostatic RCS Sweep Settings" className={"absolute top-[369px] left-[681px] w-[1189px] border border-[#555] bg-[#f0f0f0] text-lg text-[#1d1d1d] shadow-[0_6px_24px_rgba(0,0,0,0.45)] " + TAHOMA}>
        <div className={"flex h-[46px] items-center justify-between bg-white pr-[17px] pb-px pl-3 text-lg text-black " + UI}>
          <span>Monostatic RCS Sweep Settings</span><button aria-label="Close dialog"><ThinX color="#000" /></button>
        </div>
        <div className="flex gap-[29px] pt-[27px] pb-[28px] pl-[17px]">
          <div className="flex flex-col gap-[29px]">
            <Fieldset legend="Incident field settings">
              <ListBox colW="w-[148px]" heads={["Type", "Etheta Re", "Etheta Im", "Ephi Re", "Ephi Im"]} row={["Horizontal", "0", "0", "1.0", "0"]} />
              <div className="ml-[25px] flex flex-col pt-[167px]">
                <button className={sideOn + " mb-[7px]"}>Add...</button>
                <button className={sideOn + " mb-[11px]"}>Edit...</button>
                <button className={sideOn}>Delete</button>
              </div>
            </Fieldset>
            <Fieldset legend="Observation angle sweeps">
              <ListBox colW="w-[106px]" heads={["Sweep", "Tmin", "Tmax", "Tstep", "Pmin", "Pmax", "Pstep"]} />
              <div className="relative ml-[25px] flex flex-col pt-[176px]">
                <span className={"absolute top-[127px] left-[-3px] text-[30px] leading-10 font-bold text-[#ed1c24] " + UI}>13-8</span>
                <span className="absolute top-[170px] left-[-7px] h-[41px] w-[139px] border-[5px] border-[#ed1c24]" />
                <button className={sideBtn + "mb-[7px] border-[3px] border-[#0078d7] bg-[#e1e1e1]"}>Add...</button>
                <button disabled className={sideOff + " mb-2.5"}>Edit...</button>
                <button disabled className={sideOff}>Delete</button>
              </div>
            </Fieldset>
          </div>
          <div className="flex flex-col gap-2.5 pt-[13px]">
            <button className={dlgBtn + " h-[34px] w-[150px]"}>OK</button>
            <button className={dlgBtn + " h-[34px] w-[150px]"}>Close</button>
            <button className={dlgBtn + " h-[34px] w-[150px]"}>Help</button>
          </div>
        </div>
      </div>
    </>
  );
}

export default function App() {
  return (
    <div className={"relative flex min-h-screen bg-[#f0f0f0] " + UI}>
      <Defs />
      <div className="flex min-w-0 flex-1 flex-col">
        <TitleBar />
        <Ribbon />
        <div className="flex flex-1 gap-[5px]">
          <NavTree />
          <main className="flex min-w-0 flex-1 flex-col">
            <div className="flex h-[42px] items-end">
              <div className={"flex h-[39px] w-[194px] items-center gap-[7px] rounded-t border-t border-r-2 border-[#cfcfcf] bg-white pl-[18px] text-[15px] text-[#666] " + MONO}>
                <CstLogo /><span>study_csdn*</span>
                <button aria-label="Close tab" className="ml-[-2px]"><Svg w={21} h={21}><rect x=".5" y=".5" width="20" height="20" rx="3" fill="#e07a4e" stroke="#d8493a" strokeWidth="2" /><path d="M6 6l9 9M15 6l-9 9" stroke="#fff" strokeWidth="3.5" /></Svg></button>
              </div>
            </div>
            <View3D />
            <div className={"flex h-[27px] shrink-0 bg-white text-[15px] text-[#666] " + MONO}>
              <button className="w-[149px] border-r border-b-[3px] border-r-[#a5a5a5] border-b-[#005d92] pt-1">3D</button>
              <button className="my-0.5 w-[151px] border-r border-[#999]">Schematic</button>
            </div>
            <div className="mt-1.5 flex gap-2">
              <ParameterList />
              <Progress />
            </div>
          </main>
        </div>
        <StatusBar />
      </div>
      <div className="flex w-[5px] flex-col border-l border-white bg-[#fbfbfb]"><span className="h-[82px] bg-[#005687]" /></div>
      <Dialogs />
    </div>
  );
}
